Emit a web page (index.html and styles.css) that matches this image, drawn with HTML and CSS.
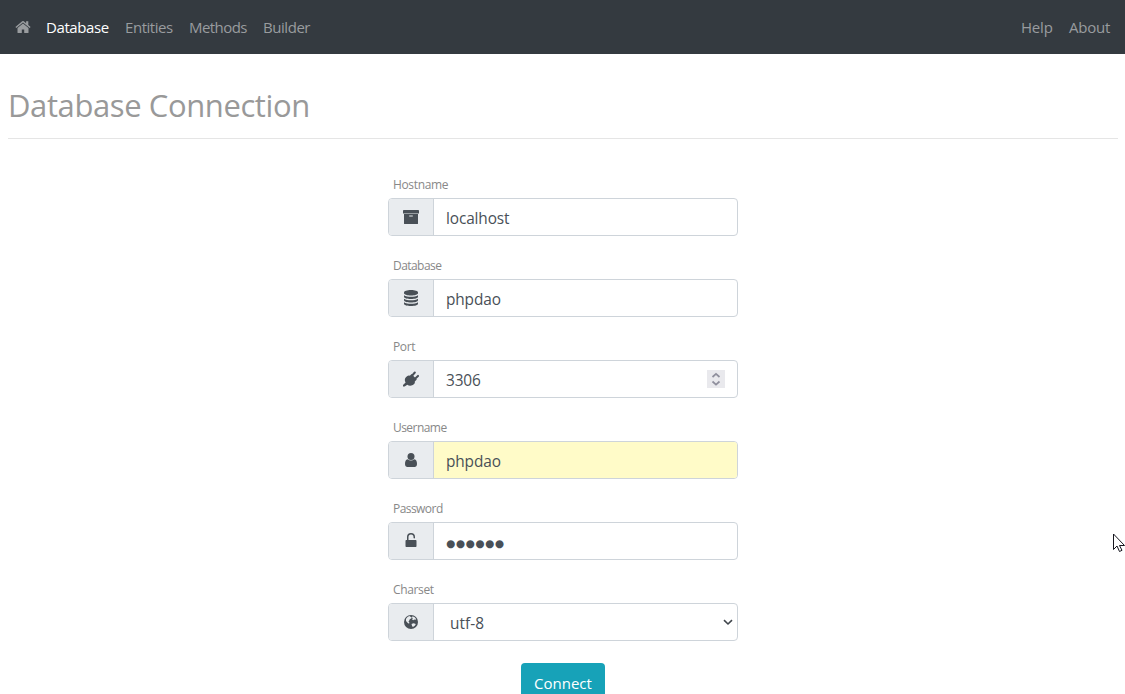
FILE: index.html
```html
<!DOCTYPE html>
<html lang="en">
<head>
<meta charset="utf-8">
<title>Database Connection</title>
<link rel="stylesheet" href="styles.css">
</head>
<body>
<nav class="navbar">
  <a class="home"><svg width="16" height="14" viewBox="0 0 16 14"><path d="M8 3.500 2.500 8v4.400c0 .3.2.600.6.600H6.800V9.500h2.400V13h3.700c.4 0 .6-.3.6-.6V8z"/><path d="M15.600 7 13.300 5.100V1.300h-2.200v1.900L8.800 1.300a1.200 1.200 0 0 0-1.600 0L.4 7l.9 1L8 2.500l6.700 5.500z"/></svg></a>
  <a class="active w-database">Database</a>
  <a class="w-entities">Entities</a>
  <a class="w-methods">Methods</a>
  <a class="w-builder">Builder</a>
  <a class="w-help">Help</a>
  <a class="w-about">About</a>
</nav>
<main class="page">
  <h1 class="title"><span>Database Connection</span></h1>
  <form class="form">
    <div class="group">
      <label>Hostname</label>
      <div class="control"><span class="addon"><svg width="16" height="14" viewBox="0 0 16 14"><path d="M.6 0h14.800c.3 0 .6.300.6.600v2.900H0V.6C0 .3.300 0 .6 0z"/><path fill-rule="evenodd" d="M1 4h14v9.400c0 .3-.3.600-.6.600H1.600c-.3 0-.6-.3-.6-.6zM6.500 5.500c-.6 0-.6 1 0 1h3c.6 0 .6-1 0-1z"/></svg></span><span class="field">localhost</span></div>
    </div>
    <div class="group">
      <label class="tight">Database</label>
      <div class="control"><span class="addon"><svg width="14" height="16" viewBox="0 0 14 16"><path d="M7 0c3.900 0 7 1 7 2.300v1c0 1.200-3.100 2.300-7 2.300S0 4.500 0 3.300v-1C0 1 3.100 0 7 0z"/><path id="disk" d="M0 5.200c1.500 1.100 4.300 1.500 7 1.500s5.500-.4 7-1.500v1.500C14 8 10.900 9 7 9S0 8 0 6.700z"/><use href="#disk" y="3.500"/><use href="#disk" y="7"/></svg></span><span class="field">phpdao</span></div>
    </div>
    <div class="group">
      <label>Port</label>
      <div class="control"><span class="addon"><svg width="16" height="16" viewBox="0 0 16 16"><path d="M2.500 7.300 4 5.800c.9-.9 2-.8 2.900-.6L8.500 3.600l5.300 5.300-2 2c.2.900 0 2-.7 2.700-2 2-4.900 2.200-6.800.7L1.600 16H0v-1.600l2.600-2.500c-1-1.500-1-3.200-.1-4.600z" transform="translate(0 -.5)"/><path class="prongs" d="m8.700 5.200 3.100-3.700M11.500 8.200l3.500-3.300"/></svg></span><span class="field">3306<svg class="spinner" width="18" height="18" viewBox="0 0 18 18"><path class="spinner-bg" d="M0 0h18v18H0z"/><path class="spinner-arrow" d="m5.500 7 3.500-3.200L12.500 7M5.500 11.500 9 14.700l3.500-3.200"/></svg></span></div>
    </div>
    <div class="group">
      <label class="tight">Username</label>
      <div class="control"><span class="addon"><svg width="12" height="14" viewBox="0 0 12 14"><circle cx="6" cy="3.500" r="3.500"/><path d="M2.700 6.200a4.700 4.700 0 0 0 6.600 0C11.300 6.400 12 8.600 12 11c0 2-1 3-2.500 3h-7C1 14 0 13 0 11c0-2.400.7-4.600 2.700-4.800z"/></svg></span><span class="field filled">phpdao</span></div>
    </div>
    <div class="group">
      <label class="tight">Password</label>
      <div class="control"><span class="addon"><svg class="lock" width="12" height="14" viewBox="0 0 12 14"><path d="M2 7V4a4 4 0 0 1 8 0v.8c0 .8-1.500.8-1.500 0V4a2.500 2.500 0 0 0-5 0v3h7.200c.5 0 .8.300.8.800v5.400c0 .5-.3.800-.8.800H1.300c-.5 0-.8-.3-.8-.8V7.800c0-.5.300-.8.800-.8z"/></svg></span><span class="field dots">●●●●●●</span></div>
    </div>
    <div class="group">
      <label>Charset</label>
      <div class="control"><span class="addon"><svg width="14" height="14" viewBox="0 0 14 14"><circle cx="7" cy="7" r="7"/><path class="land" d="M2 4C3 2.200 4.500 1.300 6.300 1.100l-.3.600 1.600.3-.3 1.500-1.400.5-.6 1.500-.9.700.9 1-.2 1.500-1.300-.8L2 6zM8.500 1.300c1.600.4 3 1.400 3.700 3l-1 .5-1-.3-1 .7-1-.4.5-1.500-.7-.8zM7.500 9l1.800-.7 2 .5.400.8c-.7 1.200-1.600 2-2.900 2.500L8 10.700z"/></svg></span><span class="field select">utf-8<svg class="chevron" width="10" height="7" viewBox="0 0 10 7"><path d="M1 1.200 5 5l4-3.800"/></svg></span></div>
    </div>
    <a class="connect"><span>Connect</span></a>
  </form>
</main>
<svg class="pointer" width="13" height="20" viewBox="0 0 13 20"><path d="M1.500 1v15.500L5 13l2.500 5.500 2.500-1.200L7.500 12.500h5z"/></svg>
</body>
</html>
```
FILE: styles.css
```css
* { box-sizing: border-box; }
html, body { height: 100%; }
body {
  margin: 0;
  overflow: hidden;
  position: relative;
  background: #fff;
  color: #495057;
  font: 15px/24px "Open Sans", "Noto Sans", sans-serif;
}
svg { display: block; fill: currentColor; }
.navbar {
  display: flex;
  align-items: center;
  gap: 16px;
  height: 54px;
  padding: 0 15px;
  background: #343a40;
  color: #999c9f;
}
.navbar a { white-space: nowrap; }
.home { width: 15px; }
.active { color: #fff; }
.w-database { width: 63px; letter-spacing: -.4px; }
.w-entities { width: 48px; letter-spacing: -.45px; }
.w-methods { width: 58px; letter-spacing: -.55px; }
.w-builder { width: 47px; letter-spacing: -.45px; }
.w-help { width: 32px; margin-left: auto; letter-spacing: -.2px; }
.w-about { width: 41px; letter-spacing: -.2px; }
.page { padding: 32px 7px 0 8px; }
.title {
  margin: 0;
  height: 53px;
  border-bottom: 1px solid #e5e5e5;
  color: #999;
  font-size: 31px;
  font-weight: 400;
  line-height: 38px;
  letter-spacing: -.4px;
}
.form {
  display: flex;
  flex-direction: column;
  align-items: center;
  padding-top: 36px;
}
.group { width: 350px; height: 81px; }
.group label {
  display: block;
  height: 23px;
  padding-left: 5px;
  color: #888;
  font-size: 12px;
  line-height: 20px;
  letter-spacing: -.35px;
}
.group .tight { letter-spacing: -.55px; }
.control {
  display: flex;
  height: 38px;
  border: 1px solid #ced4da;
  border-radius: 4px;
  overflow: hidden;
}
.addon {
  display: flex;
  align-items: center;
  justify-content: center;
  width: 45px;
  border-right: 1px solid #ced4da;
  background: #e9ecef;
}
.field {
  display: flex;
  flex: 1;
  align-items: center;
  justify-content: space-between;
  padding: 3px 12px 0;
  font-size: 15.400px;
  letter-spacing: -.12px;
}
.filled { background: #fffbc8; }
.field.dots {
  padding-top: 3px;
  font: 10.500px/24px "DejaVu Sans", sans-serif;
  letter-spacing: .600px;
}
.lock { margin-top: -2px; }
.select { padding: 3px 4px 0 16px; letter-spacing: .05px; }
.prongs { fill: none; stroke: currentColor; stroke-width: 2; stroke-linecap: round; }
.spinner { margin-top: -3px; }
.spinner-bg { fill: #e9e9ed; }
.spinner-arrow { fill: none; stroke: #8f8f9d; stroke-width: 1.700; }
.land { fill: #e9ecef; }
.chevron { margin-top: -2px; fill: none; stroke: #40464c; stroke-width: 1.600; }
.connect {
  display: flex;
  justify-content: center;
  width: 84px;
  height: 38px;
  flex-shrink: 0;
  margin-top: 2px;
  padding-top: 8px;
  border-radius: 4px;
  background: #17a2b8;
  color: #fff;
}
.pointer {
  position: absolute;
  left: 1112px;
  top: 533px;
  fill: #fff;
  stroke: #16161e;
}
```
